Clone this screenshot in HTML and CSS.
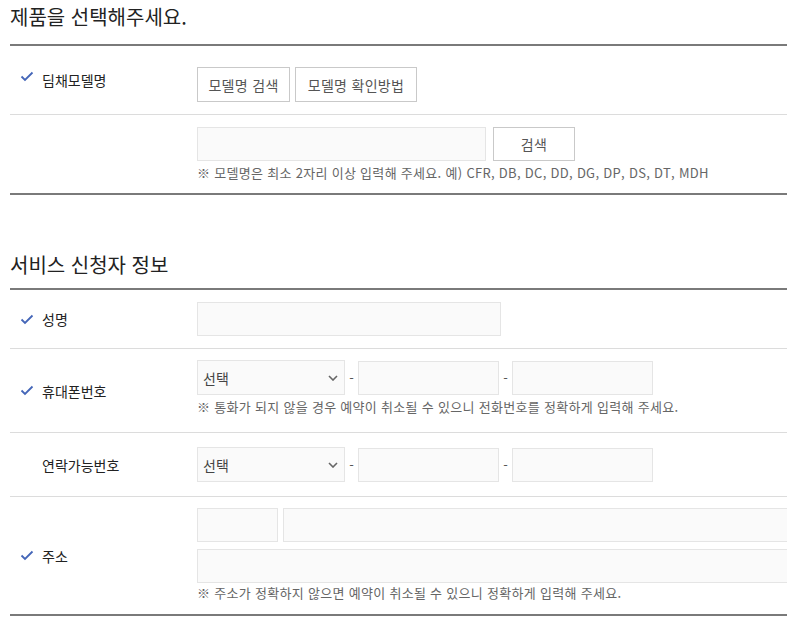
FILE: index.html
```html
<!DOCTYPE html>
<html lang="ko">
<head>
<meta charset="utf-8">
<link rel="stylesheet" href="styles.css">
</head>
<body>
<div class="page">
  <h2 class="sec-title">제품을 선택해주세요.</h2>
  <div class="table">
    <div class="row row-model">
      <div class="label"><span class="chk"><svg viewBox="0 0 14 11" width="14" height="11"><path d="M1.5 5.5 L5 9 L12.5 1.5" fill="none" stroke="#4466b8" stroke-width="1.8"/></svg></span>딤채모델명</div>
      <div class="field">
        <div class="btns">
          <button class="btn w-b1">모델명 검색</button>
          <button class="btn w-b2">모델명 확인방법</button>
        </div>
      </div>
    </div>
    <div class="row row-search">
      <div class="label"></div>
      <div class="field">
        <div class="line">
          <input class="inp w-search" type="text">
          <button class="btn btn-search">검색</button>
        </div>
        <p class="note">※ 모델명은 최소 2자리 이상 입력해 주세요. 예) CFR, DB, DC, DD, DG, DP, DS, DT, MDH</p>
      </div>
    </div>
  </div>

  <h2 class="sec-title second">서비스 신청자 정보</h2>
  <div class="table">
    <div class="row row-name">
      <div class="label"><span class="chk"><svg viewBox="0 0 14 11" width="14" height="11"><path d="M1.5 5.5 L5 9 L12.5 1.5" fill="none" stroke="#4466b8" stroke-width="1.8"/></svg></span>성명</div>
      <div class="field"><input class="inp w-name" type="text"></div>
    </div>
    <div class="row row-phone">
      <div class="label"><span class="chk"><svg viewBox="0 0 14 11" width="14" height="11"><path d="M1.5 5.5 L5 9 L12.5 1.5" fill="none" stroke="#4466b8" stroke-width="1.8"/></svg></span>휴대폰번호</div>
      <div class="field">
        <div class="line">
          <div class="sel">선택<svg class="arrow" viewBox="0 0 10 6" width="10" height="6"><path d="M1 1 L5 5 L9 1" fill="none" stroke="#666" stroke-width="1.6"/></svg></div>
          <span class="dash">-</span>
          <input class="inp w-tel" type="text">
          <span class="dash">-</span>
          <input class="inp w-tel" type="text">
        </div>
        <p class="note">※ 통화가 되지 않을 경우 예약이 취소될 수 있으니 전화번호를 정확하게 입력해 주세요.</p>
      </div>
    </div>
    <div class="row row-contact">
      <div class="label"><span class="chk blank"></span>연락가능번호</div>
      <div class="field">
        <div class="line">
          <div class="sel">선택<svg class="arrow" viewBox="0 0 10 6" width="10" height="6"><path d="M1 1 L5 5 L9 1" fill="none" stroke="#666" stroke-width="1.6"/></svg></div>
          <span class="dash">-</span>
          <input class="inp w-tel" type="text">
          <span class="dash">-</span>
          <input class="inp w-tel" type="text">
        </div>
      </div>
    </div>
    <div class="row row-addr">
      <div class="label"><span class="chk"><svg viewBox="0 0 14 11" width="14" height="11"><path d="M1.5 5.5 L5 9 L12.5 1.5" fill="none" stroke="#4466b8" stroke-width="1.8"/></svg></span>주소</div>
      <div class="field">
        <div class="line">
          <input class="inp w-zip" type="text">
          <input class="inp w-addr1" type="text">
        </div>
        <input class="inp w-addr2" type="text">
        <p class="note">※ 주소가 정확하지 않으면 예약이 취소될 수 있으니 정확하게 입력해 주세요.</p>
      </div>
    </div>
  </div>
</div>
</body>
</html>
```

FILE: styles.css
```css
html, body {
  margin: 0;
  padding: 0;
  overflow: hidden;
  background: #fff;
}
body {
  font-family: "Noto Sans CJK KR", "Noto Sans", sans-serif;
  color: #222;
}
.page {
  width: 800px;
  padding-left: 10px;
}
.sec-title {
  margin: 0;
  font-size: 20px;
  font-weight: 400;
  line-height: 34px;
  color: #222;
  border-bottom: 2px solid #7a7a7a;
  box-sizing: border-box;
  height: 46px;
}
.sec-title.second {
  margin-top: 48px;
  height: 47px;
  line-height: 44px;
}
.table {
  border-bottom: 2px solid #7a7a7a;
}
.row {
  display: grid;
  grid-template-columns: 187px 1fr;
  border-bottom: 1px solid #dcdcdc;
  box-sizing: border-box;
}
.row:last-child {
  border-bottom: none;
}
.label {
  display: flex;
  align-items: center;
  font-size: 14px;
  color: #222;
  padding-left: 10px;
}
.chk {
  display: inline-flex;
  width: 22px;
  height: 12px;
  align-items: center;
}
.field {
  display: flex;
  flex-direction: column;
  justify-content: center;
}
.row-model { height: 69px; }
.row-model .label { align-items: flex-start; padding-top: 24px; }
.row-model .field { justify-content: flex-start; padding-top: 21px; }
.row-search { height: 78px; }
.row-search .field { justify-content: flex-start; padding-top: 12px; }
.row-name { height: 59px; }
.row-phone { height: 84px; }
.row-phone .field { justify-content: flex-start; padding-top: 11px; }
.row-contact { height: 64px; }
.row-addr { height: 117px; }
.row-addr .field { justify-content: flex-start; padding-top: 11px; }

.btns, .line {
  display: flex;
  align-items: center;
}
.btns { gap: 5px; }
.btn {
  height: 35px;
  padding: 0;
  border: 1px solid #c9c9c9;
  background: #fff;
  font-family: inherit;
  font-size: 14px;
  letter-spacing: 0.3px;
  color: #555;
  box-sizing: border-box;
  text-align: center;
}
.w-b1 { width: 93px; }
.w-b2 { width: 122px; }
.btn-search {
  width: 82px;
  margin-left: 7px;
  height: 34px;
}
.inp {
  display: block;
  margin: 0;
  height: 34px;
  box-sizing: border-box;
  border: 1px solid #e5e5e5;
  background: #fafafa;
  padding: 0;
}
.w-search { width: 289px; }
.w-name { width: 304px; }
.w-tel { width: 141px; }
.w-zip { width: 81px; }
.w-addr1 { width: 520px; margin-left: 5px; }
.w-addr2 { width: 610px; margin-top: 7px; }
.sel {
  width: 148px;
  height: 35px;
  box-sizing: border-box;
  border: 1px solid #e5e5e5;
  background: #fafafa;
  display: flex;
  align-items: center;
  justify-content: space-between;
  padding: 0 6px 0 5px;
  font-size: 14px;
  color: #444;
}
.dash {
  width: 13px;
  text-align: center;
  font-size: 13px;
  color: #555;
}
.note {
  margin: 3px 0 0;
  font-size: 13px;
  letter-spacing: 0.3px;
  color: #666;
  line-height: 18px;
}
.row-addr .note { margin-top: 1px; }
```
